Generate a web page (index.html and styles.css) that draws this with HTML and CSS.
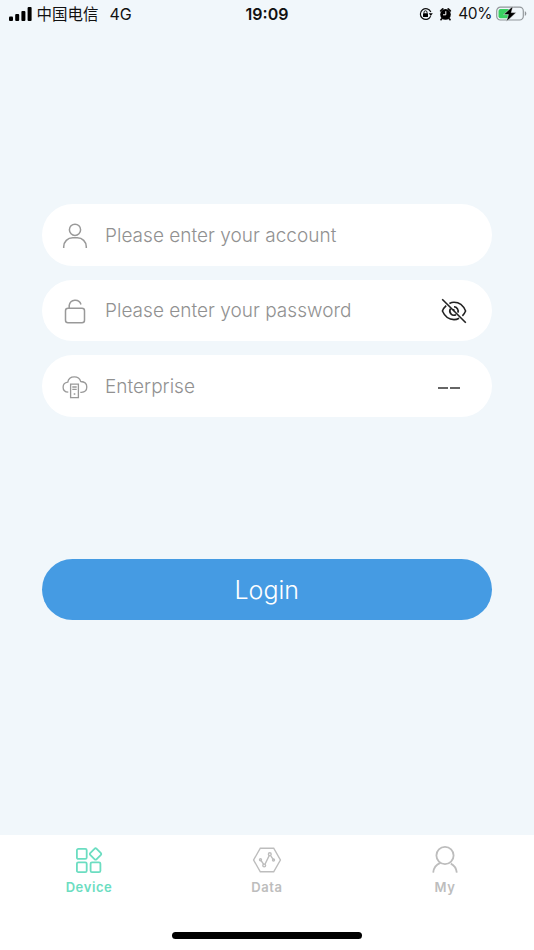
FILE: index.html
```html
<!DOCTYPE html>
<html lang="en">
<head>
<meta charset="utf-8">
<title>Login</title>
<link rel="stylesheet" href="styles.css">
</head>
<body>
<header class="status">
  <div class="status-left">
    <svg class="signal" width="23" height="14" viewBox="0 0 23 14"><rect x="0" y="9.5" width="4" height="4.5" rx="1"/><rect x="6.2" y="7" width="4" height="7" rx="1"/><rect x="12.4" y="4" width="4" height="10" rx="1"/><rect x="18.6" y="0" width="4" height="14" rx="1"/></svg>
    <span class="carrier">中国电信</span>
    <span class="network">4G</span>
  </div>
  <time class="clock">19:09</time>
  <div class="status-right">
    <svg class="rotation" width="14" height="14" viewBox="0 0 14 14"><path d="M11.7 9.3A5.4 5.4 0 1 1 11.8 5" fill="none" stroke="#111" stroke-width="1.2"/><path d="M9.8 6.2h4l-2 2.7z"/><rect x="4" y="6.3" width="5" height="3.8" rx=".5"/><path d="M5 6.5V5.3a1.5 1.5 0 0 1 3 0v1.2" fill="none" stroke="#111"/></svg>
    <svg class="alarm" width="13" height="14" viewBox="0 0 13 14"><circle cx="6.5" cy="7.4" r="5.3"/><path d="M1.7 3.9L3.8 1.9M11.3 3.9L9.2 1.9M3 11.5l-1 1.1M10 11.5l1 1.1" stroke="#111" stroke-width="1.8" stroke-linecap="round"/><path d="M6.8 4.2v3.6H4" fill="none" stroke="#fff" stroke-width="1"/></svg>
    <span class="percent">40%</span>
    <svg class="battery" width="31" height="16" viewBox="0 0 31 16"><rect x=".7" y="1.2" width="26.6" height="12.8" rx="3.7" fill="none" stroke="#92979b" stroke-width="1.2"/><rect x="2.5" y="2.9" width="11" height="9.4" rx="2" fill="#39cf61"/><path d="M28.8 5.3c2 .7 2 3.9 0 4.6z" fill="#92979b"/><path d="M17 0L7.6 8.6h4.8L10.4 15.6 20.2 6.6h-4.9z" stroke="#f2f7fb" stroke-width=".5"/></svg>
  </div>
</header>
<main class="login">
  <div class="field">
    <svg class="field-icon" width="26" height="26" viewBox="0 0 26 26"><circle cx="13" cy="6.8" r="5.6"/><path d="M1.7 25v-1.2c0-5.2 4-9 9-9h4.6c5 0 9 3.8 9 9V25"/></svg>
    <span class="label account">Please enter your account</span>
  </div>
  <div class="field">
    <svg class="field-icon" width="26" height="26" viewBox="0 0 26 26"><rect x="3.5" y="10.3" width="19" height="14.4" rx="2.5"/><path d="M7.2 10.3V7.4a6.1 6.1 0 0 1 11.8-1"/></svg>
    <span class="label password">Please enter your password</span>
    <svg class="eye" width="26" height="26" viewBox="0 0 26 26"><path d="M8.4 5.5C10 4.7 11.5 4.3 13 4.3c5.5 0 9.4 3.4 11.6 8.7-.8 1.9-1.8 3.5-3.2 4.9M18.1 20.2c-1.6.9-3.3 1.4-5.1 1.4-5.4 0-9.3-3.4-11.6-8.6.9-2.2 2.2-4 3.8-5.4M13 8.8a4.2 4.2 0 0 1 3.8 5.8M15 16.7A4.2 4.2 0 0 1 9.5 10.7M13 11.2a1.9 1.9 0 0 0 1.6 2.7M1.2 1.2l23.6 23.6"/></svg>
  </div>
  <div class="field">
    <svg class="field-icon cloud" width="26" height="26" viewBox="0 0 26 26"><path d="M6.3 18.2C3.2 18 1.1 16 1.1 13.2c0-2.6 1.8-4.6 4.7-5C6.3 4.8 9 2.9 12.4 2.9c3 0 5.4 1.6 6.3 4.6 3.7.2 6.1 2.4 6.1 5.5 0 3-2.2 5.2-5.4 5.4h-1.1"/><path d="M8.6 10.2h7.8v13.4H8.6zM10.3 13h4.4M10.3 15.3h4.4M11.7 20h1.6"/></svg>
    <span class="label enterprise">Enterprise</span>
    <span class="dashes"><i></i><i></i></span>
  </div>
  <button class="submit"><span>Login</span></button>
</main>
<nav class="tabs">
  <a class="tab active">
    <svg width="30" height="30" viewBox="0 0 30 30"><rect x="2.9" y="3.9" width="9.8" height="10" rx="1.4"/><rect x="2.9" y="17.3" width="9.8" height="9.8" rx="1.4"/><rect x="16.6" y="17.3" width="9.8" height="9.8" rx="1.4"/><path d="M20.7 3.6a1.2 1.2 0 0 1 1.7 0l4.5 4.5a1.2 1.2 0 0 1 0 1.7l-4.5 4.5a1.2 1.2 0 0 1-1.7 0l-4.5-4.5a1.2 1.2 0 0 1 0-1.7z"/></svg>
    <span>Device</span>
  </a>
  <a class="tab">
    <svg class="thin" width="30" height="30" viewBox="0 0 30 30"><path d="M8.3 3.2h13.4L28.4 15l-6.7 11.8H8.3L1.6 15zM8.7 15l3 4.3M13 19.2l4.3-8.8M18.8 10.8l2.7 4"/><circle cx="8.5" cy="14.8" r="1"/><circle cx="12.2" cy="20.5" r="1.4"/><circle cx="17.8" cy="9.2" r="1.4"/><circle cx="21.5" cy="15" r="1"/></svg>
    <span>Data</span>
  </a>
  <a class="tab">
    <svg width="30" height="30" viewBox="0 0 30 30"><circle cx="15" cy="10.5" r="8.6"/><path d="M10.4 17.9c-4 1.5-6.8 5.1-7.2 9.8M20.8 18.6c3.4 1.7 5.6 5 6 9.1"/></svg>
    <span>My</span>
  </a>
</nav>
<footer class="home"><div class="home-bar"></div></footer>
</body>
</html>
```
FILE: styles.css
```css
* { box-sizing: border-box; }
body {
  margin: 0;
  height: 950px;
  display: flex;
  flex-direction: column;
  background: #f1f7fb;
  font-family: Inter, "Noto Sans CJK SC", sans-serif;
  overflow: hidden;
}
svg { display: block; flex: none; }
.status {
  height: 28px;
  display: grid;
  grid-template-columns: 1fr auto 1fr;
  align-items: center;
  padding: 0 7px 0 9px;
  color: #111;
  font-size: 16px;
  line-height: 28px;
}
.status-left, .status-right { display: flex; align-items: center; }
.status-right { justify-content: flex-end; }
.signal { margin-right: 4.5px; }
.carrier { font-size: 15.5px; margin-right: 11px; padding-top: 1px; line-height: 27px; }
.network { font-size: 16px; }
.clock { font-weight: 600; font-size: 16px; margin-left: -2px; }
.rotation { margin-right: 6px; }
.alarm { margin-right: 6px; }
.percent { margin-right: 4px; font-size: 15.5px; letter-spacing: -.4px; }
.login {
  flex: 1;
  padding: 176px 42.5px 0 42px;
  display: flex;
  flex-direction: column;
  gap: 14px;
}
.field {
  height: 61.5px;
  flex: none;
  display: flex;
  align-items: center;
  padding: 2px 24.5px 0 19.5px;
  border-radius: 31px;
  background: #fff;
}
.field-icon {
  margin-right: 17.5px;
  fill: none;
  stroke: #999;
  stroke-width: 1.5;
}
.cloud { stroke-width: 1.3; }
.label {
  flex: 1;
  color: #919191;
  font-size: 19px;
  font-weight: 340;
  letter-spacing: .02px;
  line-height: 28px;
  white-space: nowrap;
}
.eye { fill: none; stroke: #222; stroke-width: 1.6; }
.dashes { display: flex; gap: 2px; padding: 3px 7px 0 0; }
.dashes i { width: 10px; height: 2px; background: #666; }
.submit {
  height: 61.5px;
  flex: none;
  margin-top: 128px;
  padding: 2px 0 0;
  border: 0;
  border-radius: 31px;
  background: #459be3;
  color: #fff;
  font-family: inherit;
  font-size: 25px;
  font-weight: 300;
}
.tabs {
  height: 73px;
  flex: none;
  display: grid;
  grid-template-columns: repeat(3, 1fr);
  background: #fff;
}
.tab {
  display: flex;
  flex-direction: column;
  align-items: center;
  padding-top: 10px;
  color: #bdbdbd;
  font-size: 13px;
  font-weight: 600;
  letter-spacing: .6px;
  line-height: 20px;
}
.tab span { margin-top: 2px; }
.tab svg { fill: none; stroke: currentColor; stroke-width: 1.8; }
.tab .thin { stroke-width: 1.4; }
.active { color: #6bddc1; }
.home {
  height: 42px;
  flex: none;
  display: flex;
  justify-content: center;
  padding-top: 24px;
  background: #fff;
}
.home-bar { width: 190px; height: 7px; border-radius: 4px; background: #000; }
```
